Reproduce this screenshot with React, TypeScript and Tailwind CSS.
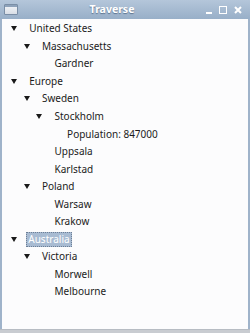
import React from "react";

type Node = { label: string; children?: Node[]; selected?: boolean };

const tree: Node[] = [
  {
    label: "United States",
    children: [{ label: "Massachusetts", children: [{ label: "Gardner" }] }],
  },
  {
    label: "Europe",
    children: [
      {
        label: "Sweden",
        children: [
          { label: "Stockholm", children: [{ label: "Population: 847000" }] },
          { label: "Uppsala" },
          { label: "Karlstad" },
        ],
      },
      { label: "Poland", children: [{ label: "Warsaw" }, { label: "Krakow" }] },
    ],
  },
  {
    label: "Australia",
    selected: true,
    children: [
      { label: "Victoria", children: [{ label: "Morwell" }, { label: "Melbourne" }] },
    ],
  },
];

function Arrow() {
  return (
    <svg width="6" height="5" viewBox="0 0 6 5" className="block">
      <path d="M0 0 L6 0 L3 5 Z" fill="#1a1a1a" />
    </svg>
  );
}

function Row({ node, depth }: { node: Node; depth: number }) {
  return (
    <>
      <div className="flex h-[17.55px] items-center" style={{ paddingLeft: 9 + depth * 12.6 }}>
        <div className="flex w-[18.3px] shrink-0 items-center">
          {node.children && <Arrow />}
        </div>
        <span
          className={
            node.selected
              ? "-ml-[3px] border border-dotted border-[#6d7f96] bg-[#a8bbd2] px-[1px] leading-[13px] text-white"
              : "leading-[13px] text-[#1b1b1b]"
          }
        >
          {node.label}
        </span>
      </div>
      {node.children?.map((c) => <Row key={c.label} node={c} depth={depth + 1} />)}
    </>
  );
}

export default function App() {
  return (
    <div className="flex h-[333px] w-[250px] flex-col bg-[#9fb3ca] font-['Noto_Sans',sans-serif]">
      <div className="relative flex h-[19px] items-center bg-gradient-to-b from-[#b4c6da] to-[#98afc8] px-[4px]">
        <div className="h-[11px] w-[14px] rounded-[1px] border border-[#7a8ea6] bg-gradient-to-b from-[#f4f6f9] to-[#d8dee6]">
          <div className="h-[2px] bg-[#8ea2ba]" />
        </div>
        <div className="flex-1 text-center text-[10.5px] font-bold text-white [text-shadow:0_1px_1px_#5d7490]">
          Traverse
        </div>
        <div className="flex items-center gap-[7px] pr-[4px]">
          <div className="mt-[6px] h-[2px] w-[6px] bg-white" />
          <div className="h-[8px] w-[8px] border-[1.5px] border-white" />
          <svg width="8" height="8" viewBox="0 0 8 8">
            <path d="M1 1 L7 7 M7 1 L1 7" stroke="white" strokeWidth="2" />
          </svg>
        </div>
      </div>
      <div className="mx-[2px] flex-1 bg-[#fcfcfd] pt-[1px] text-[10px]">
        {tree.map((n) => (
          <Row key={n.label} node={n} depth={0} />
        ))}
      </div>
      <div className="h-[4px] border-t border-[#b7bcc3] bg-[#c9ccd1]" />
    </div>
  );
}
